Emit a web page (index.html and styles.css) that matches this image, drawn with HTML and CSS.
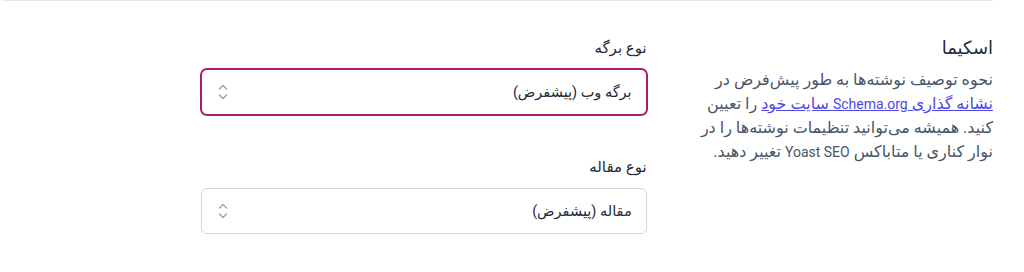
FILE: index.html
```html
<!DOCTYPE html>
<html lang="fa" dir="rtl">
<head>
<meta charset="utf-8">
<title>اسکیما</title>
<link rel="stylesheet" href="styles.css">
</head>
<body>
<section class="section">
  <div class="desc">
    <h2 class="title">اسکیما</h2>
    <p class="text">نحوه توصیف نوشته‌ها به طور پیش‌فرض در <a href="#" class="link">نشانه گذاری <span class="latin">Schema.org</span> سایت خود</a> را تعیین کنید. همیشه می‌توانید تنظیمات نوشته‌ها را در نوار کناری یا متاباکس <span class="latin">Yoast SEO</span> تغییر دهید.</p>
  </div>
  <div class="fields">
    <div class="field">
      <label class="label">نوع برگه</label>
      <div class="select focused">
        <span class="value">برگه وب (پیشفرض)</span>
        <svg class="chev" viewBox="0 0 20 20" width="20" height="20" fill="none" stroke="currentColor" stroke-width="1.4" stroke-linecap="round" stroke-linejoin="round"><path d="M6.5 7 L10 3.5 L13.5 7"/><path d="M6.5 13 L10 16.5 L13.5 13"/></svg>
      </div>
    </div>
    <div class="field">
      <label class="label">نوع مقاله</label>
      <div class="select">
        <span class="value">مقاله (پیشفرض)</span>
        <svg class="chev" viewBox="0 0 20 20" width="20" height="20" fill="none" stroke="currentColor" stroke-width="1.4" stroke-linecap="round" stroke-linejoin="round"><path d="M6.5 7 L10 3.5 L13.5 7"/><path d="M6.5 13 L10 16.5 L13.5 13"/></svg>
      </div>
    </div>
  </div>
</section>
</body>
</html>
```

FILE: styles.css
```css
html, body {
  margin: 0;
  padding: 0;
  background: #ffffff;
}
body {
  font-family: Roboto, "DejaVu Sans", sans-serif;
  color: #1e293b;
  padding: 0 31px 0 2px;
}
.section {
  border-top: 1px solid #e5e7eb;
  padding-top: 35px;
  display: grid;
  grid-template-columns: repeat(3, 1fr);
  column-gap: 48px;
}
.desc {
  grid-column: 1;
}
.title {
  margin: 0;
  font-size: 18px;
  line-height: 24px;
  font-weight: 500;
  color: #1e293b;
}
.text {
  margin: 8px 0 0;
  font-size: 16px;
  line-height: 24px;
  color: #475569;
}
.latin {
  font-size: 14px;
}
.link {
  color: #4f46e5;
  text-decoration: underline;
}
.fields {
  grid-column: 2 / span 2;
  display: flex;
  flex-direction: column;
  gap: 40px;
  max-width: 446px;
}
.field {
  display: flex;
  flex-direction: column;
}
.label {
  font-size: 15px;
  line-height: 20px;
  font-weight: 500;
  color: #1e293b;
  margin: 2px 0 11px;
}
.select {
  box-sizing: border-box;
  height: 46px;
  border: 1px solid #d1d5db;
  border-radius: 6px;
  display: flex;
  align-items: center;
  justify-content: space-between;
  padding: 0 14px 0 11px;
  font-size: 14.5px;
  color: #1e293b;
  background: #fff;
}
.select.focused {
  border-color: #a61e69;
  box-shadow: 0 0 0 1px #a61e69;
}
.chev {
  color: #9ca3af;
}
```
